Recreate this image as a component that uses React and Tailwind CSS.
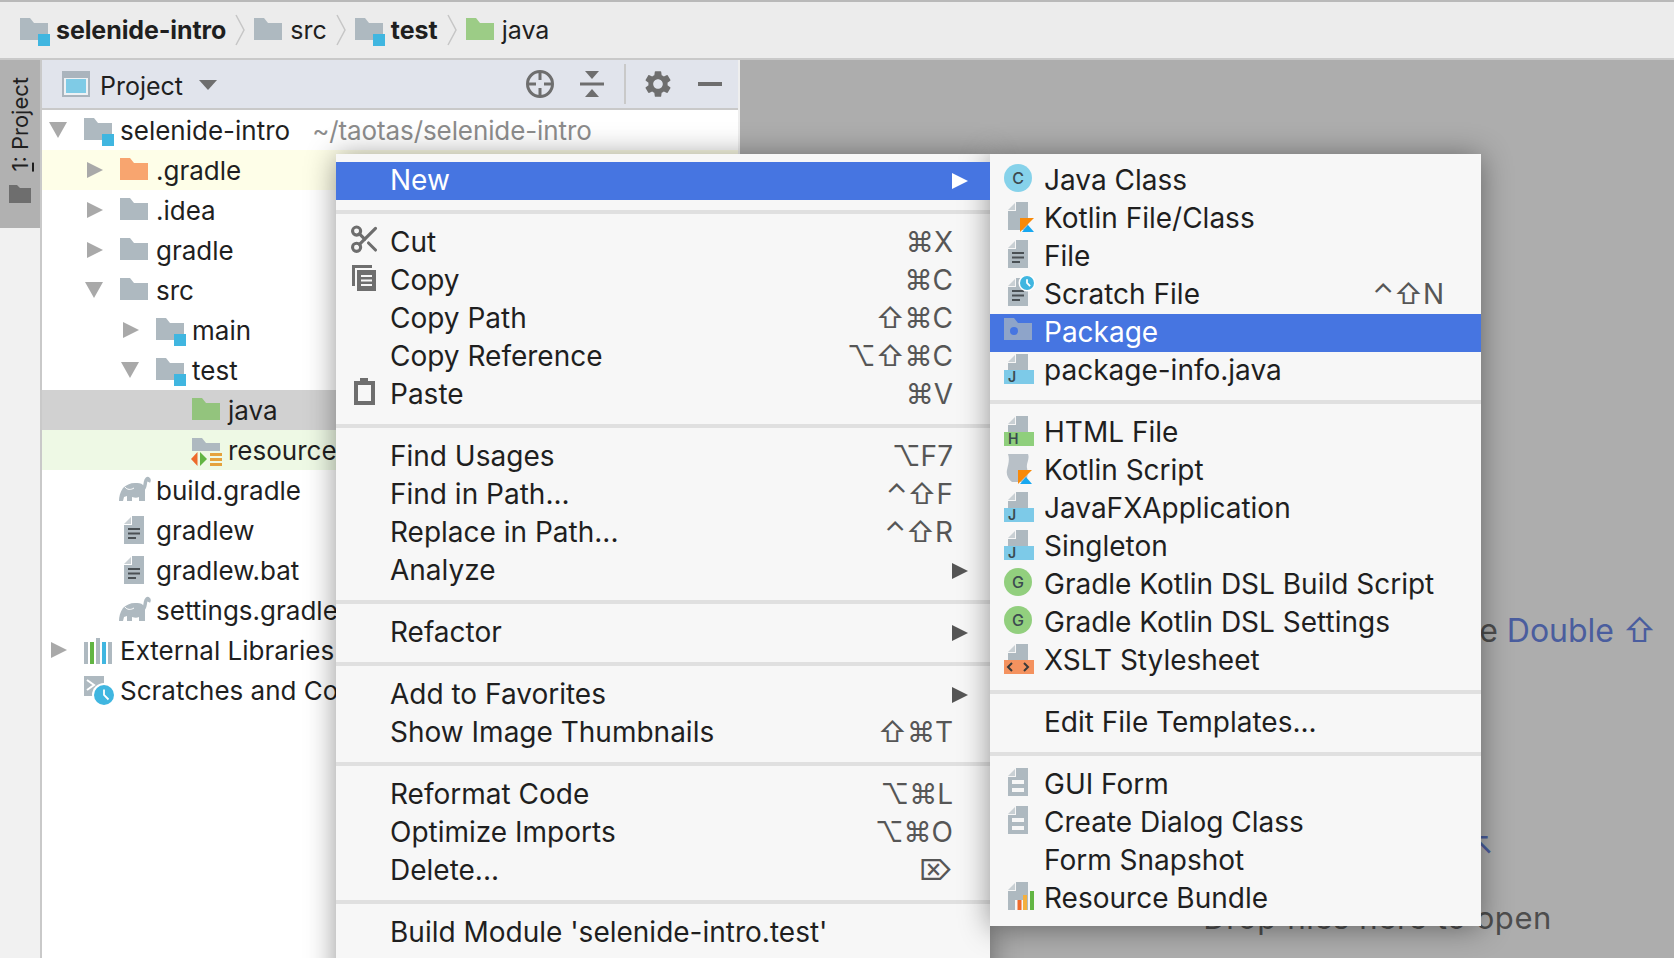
import React from 'react';
import { Scissors } from 'lucide-react';
import { MdSettings } from 'react-icons/md';

const GRAY = '#aeb9c0';
const BLUE = '#40b6e0';

const FolderShape = ({ fill = GRAY, x = 0, y = 6 }) => (
    <path transform={`translate(${x} ${y})`} d="M0 0h10l4 5h14v17H0z" fill={fill} />
);

const FileShape = ({ x = 0, y = 0, h = 28 }) => (
    <g transform={`translate(${x} ${y})`}>
        <path d={`M8 0h12v${h}H0V9h8z`} fill={GRAY} />
        <path d="M7 1v7H0z" fill="#c9d0d4" />
    </g>
);

const TextLines = ({ x = 0, y = 0 }) => (
    <g transform={`translate(${x} ${y})`} stroke="#4a5054" strokeWidth="2">
        <path d="M0 1h12M0 5.500h12M0 10h8" />
    </g>
);

const Folder = ({ fill }) => (
    <svg width="36" height="36" viewBox="0 0 36 36">
        <FolderShape fill={fill} />
    </svg>
);

const ModuleFolder = () => (
    <svg width="36" height="36" viewBox="0 0 36 36">
        <FolderShape />
        <rect x="18" y="22" width="12" height="12" fill={BLUE} />
    </svg>
);

const ResourceFolder = () => (
    <svg width="36" height="36" viewBox="0 0 36 36" className="overflow-visible">
        <FolderShape />
        <rect x="-2" y="19" width="32" height="16" fill="#eef9e5" />
        <path d="M5.500 20v14L-1 27z" fill="#ed6a2c" />
        <path d="M8 20v14l7-7z" fill="#62b543" />
        <path d="M18 21h12v3H18zM18 26h12v3H18zM18 31h12v3H18z" fill="#e5a23c" />
    </svg>
);

const Elephant = () => (
    <svg width="36" height="36" viewBox="0 0 36 36" className="overflow-visible">
        <path
            d="M-1 29c0-4 1-9 4-13 3-3 7-5 12-5 3 0 6 0 8 2l2 4v12h-6v-4c-2 1-4 1-7 0v4H7v-5c-1 0-2 1-3 1l-1 4z"
            fill={GRAY}
        />
        <path d="M22 18c3-1 3-5 3.500-8 .5-3 2-4 3-3 1 .5.5 2 0 3" fill="none" stroke={GRAY} strokeWidth="3.500" />
        <path d="M5 15c2 3 6 3 9 1" fill="none" stroke="#fff" strokeWidth="1" />
    </svg>
);

const PlainFile = () => (
    <svg width="36" height="36" viewBox="0 0 36 36">
        <FileShape x={4} y={4} />
        <TextLines x={8} y={16} />
    </svg>
);

const Libraries = () => (
    <svg width="36" height="36" viewBox="0 0 36 36">
        <path d="M0 10h4v22H0zM12 6h4v26h-4zM24 10h4v22h-4z" fill={GRAY} />
        <rect x="6" y="10" width="4" height="22" fill="#62b543" />
        <rect x="18" y="10" width="4" height="22" fill={BLUE} />
    </svg>
);

const Clock = ({ cx, cy, r, ring = 2 }) => (
    <g>
        <circle cx={cx} cy={cy} r={r + ring} fill="#fff" />
        <circle cx={cx} cy={cy} r={r} fill={BLUE} />
        <path d={`M${cx} ${cy - r * 0.55}V${cy}l${r * 0.45} ${r * 0.45}`} fill="none" stroke="#fff" strokeWidth="1.800" />
    </g>
);

const Scratches = () => (
    <svg width="36" height="36" viewBox="0 0 36 36">
        <rect x="0" y="4" width="20" height="20" fill={GRAY} />
        <path d="M3 8l7 5-7 5" fill="none" stroke="#fff" strokeWidth="2" />
        <Clock cx={20} cy={23} r={10} />
    </svg>
);

const ArrowRight = ({ className = 'border-l-[#a9a9a9]' }) => (
    <span className={`block w-0 h-0 border-y-[8.500px] border-y-transparent border-l-[16px] ${className}`} />
);

const ArrowDown = () => (
    <span className="block w-0 h-0 border-x-[9px] border-x-transparent border-t-[16px] border-t-[#a9a9a9]" />
);

const treeRows = [
    { pad: 'pl-[5px]', open: true, icon: <ModuleFolder />, label: 'selenide-intro', hint: '~/taotas/selenide-intro' },
    { pad: 'pl-[41px]', closed: true, icon: <Folder fill="#f8a56f" />, label: '.gradle', bg: 'bg-[#fefee8]' },
    { pad: 'pl-[41px]', closed: true, icon: <Folder />, label: '.idea' },
    { pad: 'pl-[41px]', closed: true, icon: <Folder />, label: 'gradle' },
    { pad: 'pl-[41px]', open: true, icon: <Folder />, label: 'src' },
    { pad: 'pl-[77px]', closed: true, icon: <ModuleFolder />, label: 'main' },
    { pad: 'pl-[77px]', open: true, icon: <ModuleFolder />, label: 'test' },
    { pad: 'pl-[113px]', icon: <Folder fill="#93c47d" />, label: 'java', bg: 'bg-[#d1d1d1]' },
    { pad: 'pl-[113px]', icon: <ResourceFolder />, label: 'resources', bg: 'bg-[#eef9e5]' },
    { pad: 'pl-[41px]', icon: <Elephant />, label: 'build.gradle' },
    { pad: 'pl-[41px]', icon: <PlainFile />, label: 'gradlew' },
    { pad: 'pl-[41px]', icon: <PlainFile />, label: 'gradlew.bat' },
    { pad: 'pl-[41px]', icon: <Elephant />, label: 'settings.gradle' },
    { pad: 'pl-[5px]', closed: true, icon: <Libraries />, label: 'External Libraries' },
    { pad: 'pl-[5px]', icon: <Scratches />, label: 'Scratches and Consoles' },
];

const TreeRow = ({ row }) => (
    <div className={`h-[40px] flex items-center whitespace-nowrap ${row.pad} ${row.bg || ''}`}>
        <span className="w-[20px] mr-[17px] flex justify-end shrink-0">
            {row.open && <ArrowDown />}
            {row.closed && <ArrowRight />}
        </span>
        <span className="w-[36px] shrink-0">{row.icon}</span>
        <span className="pt-[2px] text-[#1f1f1f]">{row.label}</span>
        {row.hint && <span className="pt-[2px] ml-[22px] text-[#8c8c8c] tracking-[-0.1px]">{row.hint}</span>}
    </div>
);

const Chevron = () => (
    <svg width="10" height="32" viewBox="0 0 10 32" className="mx-[9px]">
        <path d="M1 1l8 15-8 15" fill="none" stroke="#c6c6c6" strokeWidth="1.500" />
    </svg>
);

const Breadcrumbs = () => (
    <div className="h-[60px] bg-[#ececec] border-t-2 border-t-[#b9b9b9] border-b-2 border-b-[#c9c9c9] flex items-center pl-[20px] text-[25px] text-[#1f1f1f]">
        <ModuleFolder />
        <span className="font-bold tracking-[-0.1px]">selenide-intro</span>
        <Chevron />
        <Folder />
        <span>src</span>
        <Chevron />
        <ModuleFolder />
        <span className="font-bold">test</span>
        <Chevron />
        <Folder fill="#9ccc86" />
        <span>java</span>
    </div>
);

const ToolStrip = () => (
    <div className="w-[42px] shrink-0 bg-[#f1f1f1] border-r-2 border-r-[#c9c9c9]">
        <div className="h-[168px] bg-[#b1b1b1] flex flex-col items-center pt-[17px]">
            <span className="[writing-mode:vertical-rl] rotate-180 text-[22px] leading-[28px] text-[#1f1f1f]">
                <span className="underline">1</span>: Project
            </span>
            <svg width="22" height="18" viewBox="0 0 22 18" className="mt-[13px]">
                <path d="M0 0h8l3 3h11v15H0z" fill="#6e6e6e" />
            </svg>
        </div>
    </div>
);

const ProjectHeader = () => (
    <div className="h-[50px] shrink-0 bg-[#e1e4ec] border-b-2 border-b-[#c9c9c9] flex items-center pl-[20px]">
        <svg width="28" height="26" viewBox="0 0 28 26">
            <rect width="28" height="26" fill="#aab4bd" />
            <rect x="2" y="7" width="24" height="17" fill="#eef1f4" />
            <rect x="4" y="8" width="20" height="14" fill="#7fcbe6" />
        </svg>
        <span className="ml-[10px] pt-[3px] text-[25px] text-[#1f1f1f]">Project</span>
        <span className="ml-[16px] mt-[2px] w-0 h-0 border-x-[9px] border-x-transparent border-t-[10px] border-t-[#6e6e6e]" />
        <svg width="30" height="30" viewBox="0 0 30 30" className="ml-[308px]">
            <circle cx="15" cy="15" r="12.500" fill="none" stroke="#6e6e6e" strokeWidth="3" />
            <path d="M15 3v8M15 19v8M3 15h8M19 15h8" stroke="#6e6e6e" strokeWidth="3" />
        </svg>
        <svg width="24" height="26" viewBox="0 0 24 26" className="ml-[25px]">
            <path d="M0 11.500h24v3H0z" fill="#6e6e6e" />
            <path d="M5 0h14l-7 8zM5 26h14l-7-8z" fill="#6e6e6e" />
        </svg>
        <span className="ml-[20px] w-[2px] h-[40px] bg-[#c9c9c9]" />
        <MdSettings className="ml-[16px] text-[#6e6e6e]" size={32} />
        <span className="ml-[24px] w-[24px] h-[4px] bg-[#6e6e6e]" />
    </div>
);

const CutIcon = () => (
    <svg width="55" height="38" viewBox="0 0 55 38">
        <g transform="translate(12.500 -1) scale(1.350)">
            <Scissors size={24} stroke="#6e6e6e" strokeWidth={2.300} />
        </g>
    </svg>
);

const CopyIcon = () => (
    <svg width="55" height="38" viewBox="0 0 55 38">
        <path d="M16 3h20v3H19v18h-3z" fill="#6e6e6e" />
        <rect x="21" y="8" width="19" height="21" fill="#6e6e6e" />
        <path d="M25 14h11M25 18.500h11M25 23h11" stroke="#f6f6f6" strokeWidth="2" />
    </svg>
);

const PasteIcon = () => (
    <svg width="55" height="38" viewBox="0 0 55 38">
        <path d="M18 5h6V2h8v3h7v24H18zM22 9v16h13V9z" fill="#6e6e6e" fillRule="evenodd" />
    </svg>
);

const mainSections = [
    [{ label: 'New', arrow: true, active: true }],
    [
        { label: 'Cut', keys: '⌘X', icon: <CutIcon /> },
        { label: 'Copy', keys: '⌘C', icon: <CopyIcon /> },
        { label: 'Copy Path', keys: '⇧⌘C' },
        { label: 'Copy Reference', keys: '⌥⇧⌘C' },
        { label: 'Paste', keys: '⌘V', icon: <PasteIcon /> },
    ],
    [
        { label: 'Find Usages', keys: '⌥F7' },
        { label: 'Find in Path...', keys: '⌃⇧F' },
        { label: 'Replace in Path...', keys: '⌃⇧R' },
        { label: 'Analyze', arrow: true },
    ],
    [{ label: 'Refactor', arrow: true }],
    [
        { label: 'Add to Favorites', arrow: true },
        { label: 'Show Image Thumbnails', keys: '⇧⌘T' },
    ],
    [
        { label: 'Reformat Code', keys: '⌥⌘L' },
        { label: 'Optimize Imports', keys: '⌥⌘O' },
        { label: 'Delete...', keys: '⌦' },
    ],
    [{ label: "Build Module 'selenide-intro.test'" }],
];

const SubIcon = ({ children }) => (
    <svg width="55" height="38" viewBox="0 0 55 38">
        {children}
    </svg>
);

const Kotlin = ({ x = 0, y = 0 }) => (
    <g transform={`translate(${x} ${y})`}>
        <path d="M0 0h14L0 14z" fill="#f88909" />
        <path d="M2 14l6-7 6 7z" fill="#18a8f0" />
    </g>
);

const Badge = ({ fill, letter }) => (
    <SubIcon>
        <FileShape x={18} y={2} h={16} />
        <rect x="14" y="18" width="30" height="14" fill={fill} />
        <text x="18" y="30" fontSize="14" fontWeight="600" fill="#3a4a50" fontFamily="Inter">
            {letter}
        </text>
    </SubIcon>
);

const RoundIcon = ({ fill, letter }) => (
    <SubIcon>
        <circle cx="28" cy="16" r="14" fill={fill} />
        <text x="28" y="22" fontSize="16" fontWeight="500" textAnchor="middle" fill="#3c4a50" fontFamily="Inter">
            {letter}
        </text>
    </SubIcon>
);

const FormIcon = () => (
    <SubIcon>
        <FileShape x={18} y={2} />
        <path d="M22 14h12v4H22zM22 22h12v4H22z" fill="#f7f7f7" />
    </SubIcon>
);

const subSections = [
    [
        { label: 'Java Class', icon: <RoundIcon fill="#86d2ea" letter="C" /> },
        {
            label: 'Kotlin File/Class',
            icon: (
                <SubIcon>
                    <FileShape x={18} y={2} />
                    <Kotlin x={30} y={18} />
                </SubIcon>
            ),
        },
        {
            label: 'File',
            icon: (
                <SubIcon>
                    <FileShape x={18} y={2} />
                    <TextLines x={22} y={14} />
                </SubIcon>
            ),
        },
        {
            label: 'Scratch File',
            keys: '⌃⇧N',
            icon: (
                <SubIcon>
                    <FileShape x={18} y={2} />
                    <TextLines x={22} y={14} />
                    <Clock cx={37} cy={7} r={7} ring={1.500} />
                </SubIcon>
            ),
        },
        {
            label: 'Package',
            active: true,
            icon: (
                <SubIcon>
                    <FolderShape x={14} y={4} fill="#8ea4c9" />
                    <circle cx="24" cy="17" r="4" fill="#4675e1" />
                </SubIcon>
            ),
        },
        { label: 'package-info.java', icon: <Badge fill="#7dcae8" letter="J" /> },
    ],
    [
        { label: 'HTML File', icon: <Badge fill="#8fcf7c" letter="H" /> },
        {
            label: 'Kotlin Script',
            icon: (
                <SubIcon>
                    <path d="M18 2h20c2 5-2 9-1 14 1 4 1 8-1 14H22c-4-3-6-8-5-12 1-5 3-10 1-16z" fill="#b8c0c7" />
                    <Kotlin x={28} y={18} />
                </SubIcon>
            ),
        },
        { label: 'JavaFXApplication', icon: <Badge fill="#7dcae8" letter="J" /> },
        { label: 'Singleton', icon: <Badge fill="#7dcae8" letter="J" /> },
        { label: 'Gradle Kotlin DSL Build Script', icon: <RoundIcon fill="#92cf7e" letter="G" /> },
        { label: 'Gradle Kotlin DSL Settings', icon: <RoundIcon fill="#92cf7e" letter="G" /> },
        {
            label: 'XSLT Stylesheet',
            icon: (
                <SubIcon>
                    <FileShape x={18} y={2} h={16} />
                    <rect x="14" y="18" width="30" height="14" fill="#f4925f" />
                    <path d="M22 21l-4 4 4 4M34 21l4 4-4 4" fill="none" stroke="#3a3a3a" strokeWidth="2" />
                </SubIcon>
            ),
        },
    ],
    [{ label: 'Edit File Templates...' }],
    [
        { label: 'GUI Form', icon: <FormIcon /> },
        { label: 'Create Dialog Class', icon: <FormIcon /> },
        { label: 'Form Snapshot' },
        {
            label: 'Resource Bundle',
            icon: (
                <SubIcon>
                    <FileShape x={18} y={2} />
                    <rect x="25" y="20" width="12" height="12" fill="#f7f7f7" />
                    <rect x="27.500" y="20" width="4" height="10" fill="#ed6a2c" />
                    <rect x="33" y="15" width="4" height="15" fill="#f4af3d" />
                    <rect x="40" y="11" width="4" height="19" fill="#62b543" />
                </SubIcon>
            ),
        },
    ],
];

const MenuRow = ({ item }) => (
    <div className={`relative h-[38px] flex items-center pl-[54px] pb-[2px] text-[28px] whitespace-nowrap ${item.active ? 'bg-[#4675e1] text-white' : 'text-[#1f1f1f]'}`}>
        {item.icon && <span className="absolute left-0 top-0">{item.icon}</span>}
        <span>{item.label}</span>
        {item.keys && <span className="ml-auto pr-[37px] text-[#565656]">{item.keys}</span>}
        {item.arrow && (
            <span className="ml-auto pr-[22px] pt-[2px]">
                <ArrowRight className={item.active ? 'border-l-white' : 'border-l-[#555555]'} />
            </span>
        )}
    </div>
);

const MenuPanel = ({ sections, className }) => (
    <div className={`bg-[#f7f7f7] pt-2 pb-2 shadow-[0_2px_28px_rgba(0,0,0,0.42)] ${className}`}>
        {sections.map((rows, i) => (
            <div key={i}>
                {i > 0 && <div className="h-[4px] my-[10px] bg-[#e0e0e0]" />}
                {rows.map((item) => (
                    <MenuRow key={item.label} item={item} />
                ))}
            </div>
        ))}
    </div>
);

const EditorHints = () => (
    <div className="flex-1 bg-[#adadad] leading-[40px] text-[#4d4d4d] text-right pt-[551px] whitespace-nowrap">
        <div className="pr-[18px] text-[32px]">
            Search Everywhere <span className="text-[#4a5d9e]">Double ⇧</span>
        </div>
        <div className="pr-[180px] mt-[174px] text-[32px] text-[#4a5d9e]">⌘↖</div>
        <div className="pr-[122px] mt-[33px] text-[31px] tracking-[0.6px]">Drop files here to open</div>
    </div>
);

export default function App() {
    return (
        <div className="relative w-[1674px] h-[958px] overflow-hidden bg-white font-['Inter','DejaVu_Sans',sans-serif] text-[26px] leading-[38px]">
            <Breadcrumbs />
            <div className="flex h-[898px]">
                <ToolStrip />
                <div className="w-[698px] shrink-0 flex flex-col bg-white border-r-2 border-r-[#eeeeee]">
                    <ProjectHeader />
                    <div className="overflow-hidden">
                        {treeRows.map((row) => (
                            <TreeRow key={row.label} row={row} />
                        ))}
                    </div>
                </div>
                <EditorHints />
            </div>
            <div className="absolute left-[336px] top-[154px] flex items-start">
                <MenuPanel sections={mainSections} className="w-[654px] h-[900px]" />
                <MenuPanel sections={subSections} className="w-[491px]" />
            </div>
        </div>
    );
}
